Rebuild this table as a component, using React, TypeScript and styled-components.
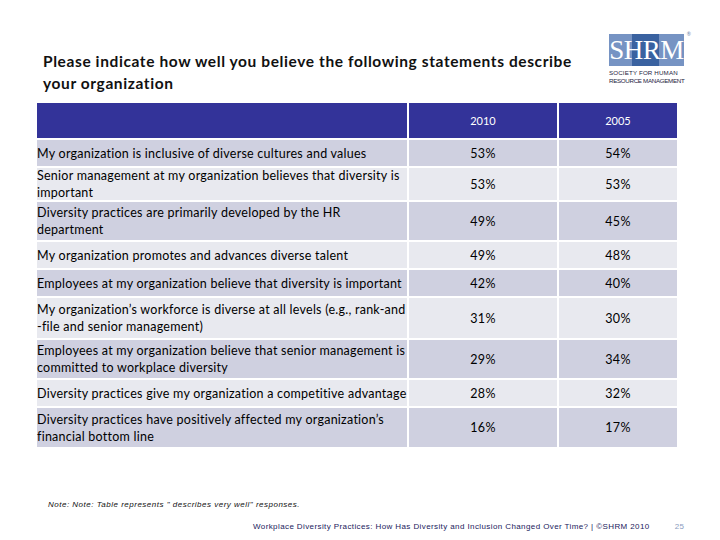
import React from 'react';
import styled, {createGlobalStyle} from 'styled-components';

type RowType = {
    label: string[]
    y2010: string
    y2005: string
    height: number
}

const rows: RowType[] = [
    {label: ['My organization is inclusive of diverse cultures and values'], y2010: '53%', y2005: '54%', height: 26},
    {label: ['Senior management at my organization believes that diversity is', 'important'], y2010: '53%', y2005: '53%', height: 32},
    {label: ['Diversity practices are primarily developed by the HR', 'department'], y2010: '49%', y2005: '45%', height: 38},
    {label: ['My organization promotes and advances diverse talent'], y2010: '49%', y2005: '48%', height: 26},
    {label: ['Employees at my organization believe that diversity is important'], y2010: '42%', y2005: '40%', height: 26},
    {label: ['My organization\u2019s workforce is diverse at all levels (e.g., rank-and', '-file and senior management)'], y2010: '31%', y2005: '30%', height: 40},
    {label: ['Employees at my organization believe that senior management is', 'committed to workplace diversity'], y2010: '29%', y2005: '34%', height: 38},
    {label: ['Diversity practices give my organization a competitive advantage'], y2010: '28%', y2005: '32%', height: 26},
    {label: ['Diversity practices have positively affected my organization\u2019s', 'financial bottom line'], y2010: '16%', y2005: '17%', height: 39},
];

const GlobalStyle = createGlobalStyle`
  html, body {
    margin: 0;
    padding: 0;
    background: #fff;
  }
  * {
    box-sizing: border-box;
  }
`

const ShrmLogo = () => (
    <Logo>
        <LogoBox>
            <LogoDark/>
            <LogoLetters>SHRM</LogoLetters>
            <Registered>®</Registered>
        </LogoBox>
        <LogoCaption spacing={0.15} first>SOCIETY FOR HUMAN</LogoCaption>
        <LogoCaption spacing={-0.3}>RESOURCE MANAGEMENT</LogoCaption>
    </Logo>
);

export default function App() {
    return (
        <Page>
            <GlobalStyle/>
            <TopBar>
                <Title>
                    Please indicate how well you believe the following statements describe<br/>
                    your organization
                </Title>
                <ShrmLogo/>
            </TopBar>
            <Table>
                <HeadCell/>
                <HeadCell>2010</HeadCell>
                <HeadCell>2005</HeadCell>
                {rows.map((row, i) => (
                    <React.Fragment key={i}>
                        <LabelCell dark={i % 2 === 0} style={{height: row.height}}>
                            {row.label.map((line, j) => <span key={j}>{line}</span>)}
                        </LabelCell>
                        <ValueCell dark={i % 2 === 0}>{row.y2010}</ValueCell>
                        <ValueCell dark={i % 2 === 0}>{row.y2005}</ValueCell>
                    </React.Fragment>
                ))}
            </Table>
            <Note>Note: Note: Table represents &quot; describes very well&quot; responses.</Note>
            <Footer>
                <FooterText>Workplace Diversity Practices: How Has Diversity and Inclusion Changed Over Time? | ©SHRM 2010</FooterText>
                <PageNumber>25</PageNumber>
            </Footer>
        </Page>
    );
}

const Page = styled.div`
  width: 720px;
  height: 540px;
  overflow: hidden;
  background: #fff;
  font-family: Lato, "Liberation Sans", sans-serif;
  color: #000;
`
const TopBar = styled.div`
  display: flex;
  justify-content: space-between;
  align-items: flex-start;
  height: 103px;
  padding: 34px 35px 0 43px;
`
const Title = styled.h1`
  margin: 16px 0 0;
  font-size: 15.5px;
  font-weight: 700;
  line-height: 22px;
  letter-spacing: 0.6px;
  color: #111;
`
const Logo = styled.div`
  display: flex;
  flex-direction: column;
  align-items: flex-start;
  width: 76px;
`
const LogoBox = styled.div`
  position: relative;
  width: 75px;
  height: 32px;
  background: #7693c3;
`
const LogoDark = styled.div`
  position: absolute;
  left: 23px;
  top: 0;
  width: 27px;
  height: 100%;
  background: #3a62a0;
`
const LogoLetters = styled.div`
  position: relative;
  text-align: center;
  font-family: "Liberation Serif", serif;
  font-size: 27px;
  line-height: 33px;
  color: #fff;
  letter-spacing: -0.5px;
`
const Registered = styled.span`
  position: absolute;
  right: -7px;
  top: -3px;
  font-size: 5px;
  line-height: 6px;
  color: #6b7fa8;
`
const LogoCaption = styled.div<{spacing: number, first?: boolean}>`
  margin-top: ${props => props.first ? '3px' : '0'};
  font-family: "Liberation Sans", sans-serif;
  font-size: 6.2px;
  line-height: 8px;
  color: #1c2340;
  letter-spacing: ${props => props.spacing}px;
  white-space: nowrap;
`
const Table = styled.div`
  display: grid;
  grid-template-columns: 370px 148px 118px;
  column-gap: 2px;
  row-gap: 2px;
  margin-left: 37px;
  width: 640px;
`
const HeadCell = styled.div`
  height: 35px;
  display: flex;
  align-items: center;
  justify-content: center;
  background: #333399;
  color: #fff;
  font-size: 11px;
`
const LabelCell = styled.div<{dark: boolean}>`
  display: flex;
  flex-direction: column;
  justify-content: center;
  background: ${props => props.dark ? '#cfd0e0' : '#e8e9ef'};
  font-size: 12.5px;
  letter-spacing: 0.25px;
  line-height: 17px;
  white-space: nowrap;
`
const ValueCell = styled.div<{dark: boolean}>`
  display: flex;
  align-items: center;
  justify-content: center;
  background: ${props => props.dark ? '#cfd0e0' : '#e8e9ef'};
  font-size: 12.5px;
  letter-spacing: 0.3px;
`
const Note = styled.div`
  margin: 53px 0 0 48px;
  font-family: "Liberation Sans", sans-serif;
  font-style: italic;
  font-size: 8px;
  letter-spacing: 0.5px;
  line-height: 10px;
  color: #111;
`
const Footer = styled.div`
  display: flex;
  align-items: center;
  margin-top: 12px;
  padding-left: 253px;
  font-family: "Liberation Sans", sans-serif;
  font-size: 8px;
  letter-spacing: 0.4px;
`
const FooterText = styled.span`
  color: #1a1a5c;
`
const PageNumber = styled.span`
  margin-left: 25px;
  color: #8a9bc0;
`
